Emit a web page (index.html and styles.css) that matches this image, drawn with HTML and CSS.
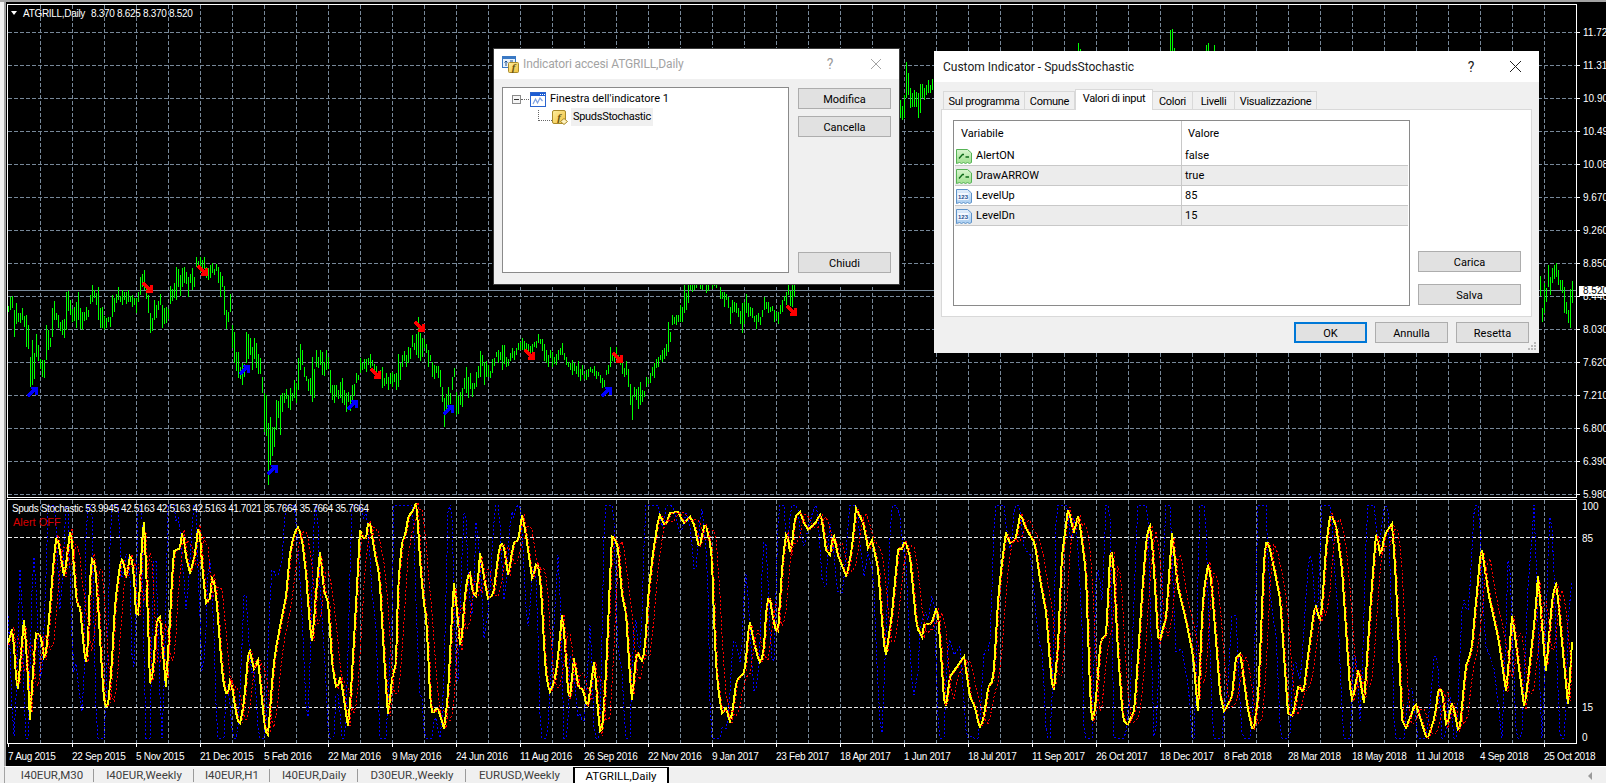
FILE: index.html
```html
<!DOCTYPE html>
<html lang="it">
<head>
<meta charset="utf-8">
<title>ATGRILL,Daily</title>
<link rel="stylesheet" href="styles.css">
</head>
<body>
<svg class="defs" width="0" height="0" aria-hidden="true">
  <defs>
    <linearGradient id="gGreen" x1="0" y1="0" x2="0" y2="1"><stop offset="0" stop-color="#d9f5d0"/><stop offset="1" stop-color="#9fe08f"/></linearGradient>
    <linearGradient id="gBlue" x1="0" y1="0" x2="0" y2="1"><stop offset="0" stop-color="#e3effb"/><stop offset="1" stop-color="#a9cdf0"/></linearGradient>
    <linearGradient id="gGold" x1="0" y1="0" x2="1" y2="1"><stop offset="0" stop-color="#fdeea0"/><stop offset="1" stop-color="#f0c13c"/></linearGradient>
    <symbol id="i-bool" viewBox="0 0 16 16">
      <path d="M.5 1.5h11l4 3.500v9.500l-2 1-2-1-2 1-2-1-2 1-2-1-3 1z" fill="url(#gGreen)" stroke="#56b356"/>
      <path d="M3 10.500l3.500-4H8M9.500 9H13" fill="none" stroke="#0f6b1a" stroke-width="1.300"/>
    </symbol>
    <symbol id="i-num" viewBox="0 0 16 16">
      <path d="M.5 1.5h11l4 3.500v9.500l-2 1-2-1-2 1-2-1-2 1-2-1-3 1z" fill="url(#gBlue)" stroke="#5f93c9"/>
      <rect x="1.500" y="5" width="11" height="7" fill="#f4f9ff"/>
      <text class="num-text" x="7" y="11">123</text>
    </symbol>
    <symbol id="i-func" viewBox="0 0 16 15">
      <rect x=".5" y=".5" width="13" height="13" rx="1.500" fill="url(#gGold)" stroke="#a98a2b"/>
      <text class="func-text" x="7" y="11">f</text>
      <path d="M12 8.500l3.500 3-3.500 3-3.500-3z" fill="#fff3c0" stroke="#a98a2b"/>
    </symbol>
    <symbol id="i-win" viewBox="0 0 16 15">
      <rect x=".5" y=".5" width="15" height="14" fill="#fff" stroke="#2a64cf"/>
      <rect x="1" y="1" width="14" height="3" fill="#1c5bd2"/>
      <path d="M10 2.500h1M12 2.500h1M14 2.500h1" stroke="#fff"/>
      <path d="M3 12l2.500-5 2 4 2.500-5 2.500 3" fill="none" stroke="#7c9fe0" stroke-width="1.200"/>
    </symbol>
  </defs>
</svg>

<div class="topline"></div>
<main class="workspace">
  <section class="pane pane-main">
    <div class="plot plot-main">
      <svg id="mainChart" class="chart" width="1568" height="492" viewBox="8 5 1568 492" shape-rendering="crispEdges"></svg>
      <div class="chart-title"><span class="caret"></span><span>ATGRILL,Daily</span><span class="ohlc">8.370 8.625 8.370 8.520</span></div>
    </div>
    <div class="price-axis">
      <span>11.72</span><span>11.31</span><span>10.90</span><span>10.49</span><span>10.08</span><span>9.670</span><span>9.260</span><span>8.850</span><span>8.440</span><span>8.030</span><span>7.620</span><span>7.210</span><span>6.800</span><span>6.390</span><span>5.980</span>
      <b class="price-tag">8.520</b>
    </div>
  </section>
  <section class="pane pane-sub">
    <div class="plot plot-sub">
      <svg id="subChart" class="chart" width="1568" height="243" viewBox="8 500 1568 243" shape-rendering="crispEdges"></svg>
      <div class="sub-title">Spuds Stochastic 53.9945 42.5163 42.5163 42.5163 41.7021 35.7664 35.7664 35.7664</div>
      <div class="alert-off">Alert OFF</div>
    </div>
    <div class="level-axis">
      <span class="lv lv100">100</span><span class="lv lv85">85</span><span class="lv lv15">15</span><span class="lv lv0">0</span>
    </div>
  </section>
  <div class="time-axis">
    <span>7 Aug 2015</span><span>22 Sep 2015</span><span>5 Nov 2015</span><span>21 Dec 2015</span><span>5 Feb 2016</span><span>22 Mar 2016</span><span>9 May 2016</span><span>24 Jun 2016</span><span>11 Aug 2016</span><span>26 Sep 2016</span><span>22 Nov 2016</span><span>9 Jan 2017</span><span>23 Feb 2017</span><span>18 Apr 2017</span><span>1 Jun 2017</span><span>18 Jul 2017</span><span>11 Sep 2017</span><span>26 Oct 2017</span><span>18 Dec 2017</span><span>8 Feb 2018</span><span>28 Mar 2018</span><span>18 May 2018</span><span>11 Jul 2018</span><span>4 Sep 2018</span><span>25 Oct 2018</span>
  </div>
</main>
<nav class="tabbar">
  <span class="ctab">I40EUR,M30</span>
  <span class="ctab">I40EUR,Weekly</span>
  <span class="ctab">I40EUR,H1</span>
  <span class="ctab">I40EUR,Daily</span>
  <span class="ctab">D30EUR.,Weekly</span>
  <span class="ctab ctab-last">EURUSD,Weekly</span>
  <span class="ctab ctab-active">ATGRILL,Daily</span>
  <span class="scroll-arrow"></span>
</nav>

<div class="dialog dlg-list">
  <header class="dlg-head dlg-head-inactive">
    <svg class="dlg-icon" width="17" height="17" viewBox="0 0 17 17">
      <rect x=".5" y=".5" width="13" height="11" fill="#eaf3fc" stroke="#3a79c4"/>
      <rect x="1" y="1" width="12" height="2" fill="#3a79c4"/>
      <path d="M4 5v5M2.500 6.500L4 5l1.500 1.500M8 5h3M8 8h3" fill="none" stroke="#1e4f8c"/>
      <rect x="6.500" y="6.500" width="10" height="10" rx="1" fill="url(#gGold)" stroke="#a98a2b"/>
      <text class="func-text" x="11.500" y="14.500">f</text>
    </svg>
    <span class="dlg-title">Indicatori accesi ATGRILL,Daily</span>
    <span class="dlg-help">?</span>
    <svg class="dlg-close" width="10" height="10" viewBox="0 0 10 10"><path d="M0 0l10 10M10 0L0 10" stroke="currentColor" fill="none"/></svg>
  </header>
  <div class="list-body">
    <div class="tree">
      <div class="tree-row">
        <span class="minus"></span><span class="dots-h"></span>
        <svg class="tree-icon" width="16" height="15"><use href="#i-win"/></svg>
        <span class="tree-label">Finestra dell'indicatore 1</span>
      </div>
      <div class="tree-row tree-child">
        <span class="elbow"></span>
        <svg class="tree-icon" width="16" height="15"><use href="#i-func"/></svg>
        <span class="tree-label tree-selected">SpudsStochastic</span>
      </div>
    </div>
    <div class="list-actions">
      <button class="btn">Modifica</button>
      <button class="btn">Cancella</button>
      <button class="btn btn-bottom">Chiudi</button>
    </div>
  </div>
</div>

<div class="dialog dlg-props">
  <header class="dlg-head">
    <span class="dlg-title">Custom Indicator - SpudsStochastic</span>
    <span class="dlg-help">?</span>
    <svg class="dlg-close" width="11" height="11" viewBox="0 0 11 11"><path d="M0 0l11 11M11 0L0 11" stroke="currentColor" fill="none"/></svg>
  </header>
  <div class="props-body">
    <div class="tabs">
      <span class="tab t1">Sul programma</span>
      <span class="tab t2">Comune</span>
      <span class="tab t3 tab-active">Valori di input</span>
      <span class="tab t4">Colori</span>
      <span class="tab t5">Livelli</span>
      <span class="tab t6">Visualizzazione</span>
    </div>
    <div class="panel">
      <div class="vargrid">
        <div class="row row-head"><span class="c1 head-cell">Variabile</span><span class="c2 head-cell">Valore</span></div>
        <div class="row"><span class="c1"><svg class="var-icon" width="16" height="16"><use href="#i-bool"/></svg>AlertON</span><span class="c2">false</span></div>
        <div class="row row-alt"><span class="c1"><svg class="var-icon" width="16" height="16"><use href="#i-bool"/></svg>DrawARROW</span><span class="c2">true</span></div>
        <div class="row"><span class="c1"><svg class="var-icon" width="16" height="16"><use href="#i-num"/></svg>LevelUp</span><span class="c2">85</span></div>
        <div class="row row-alt"><span class="c1"><svg class="var-icon" width="16" height="16"><use href="#i-num"/></svg>LevelDn</span><span class="c2">15</span></div>
      </div>
      <div class="panel-side">
        <button class="btn btn-wide">Carica</button>
        <button class="btn btn-wide">Salva</button>
      </div>
    </div>
    <div class="props-foot">
      <button class="btn btn-foot btn-default">OK</button>
      <button class="btn btn-foot">Annulla</button>
      <button class="btn btn-foot">Resetta</button>
    </div>
  </div>
  <svg class="grip" width="9" height="9" viewBox="0 0 9 9"><path d="M7 1h2v2H7zM4 4h2v2H4zM7 4h2v2H7zM1 7h2v2H1zM4 7h2v2H4zM7 7h2v2H7z" fill="#b8b8b8"/></svg>
</div>
<script src="chart.js"></script>
</body>
</html>
```
FILE: styles.css
```css
* { box-sizing: border-box; }
html, body { margin: 0; padding: 0; }
body {
  width: 1606px;
  height: 783px;
  overflow: hidden;
  position: relative;
  background: #f0f0f0;
  font-family: Roboto, "Liberation Sans", sans-serif;
  display: flex;
  flex-direction: column;
}
.defs { position: absolute; }
.num-text { font: bold 6px "Liberation Sans", sans-serif; fill: #1d4f8f; text-anchor: middle; }
.func-text { font: italic bold 11px "Liberation Serif", serif; fill: #6b5410; text-anchor: middle; }

/* chart drawing */
.grid { fill: none; stroke: #778899; stroke-width: 1; stroke-dasharray: 4 2; }
.level { fill: none; stroke: #e8e8e8; stroke-width: 1; stroke-dasharray: 4 2; }
.price-line { fill: none; stroke: #778899; stroke-width: 1; }
.bars { fill: none; stroke: #00ff00; stroke-width: 1; }
.arrow-up { fill: #0000ff; }
.arrow-dn { fill: #ff0000; }
.stoch-blue { fill: none; stroke: #0000ff; stroke-width: 1; stroke-dasharray: 2 2; }
.stoch-red-slow { fill: none; stroke: #ff0000; stroke-width: 1; stroke-dasharray: 2 2; }
.stoch-yellow { fill: none; stroke: #ffff00; stroke-width: 2; }
.stoch-red { fill: none; stroke: #ff0000; stroke-width: 1; stroke-dasharray: 2 2; }

.topline { height: 2px; background: #a3a3a3; flex: none; }

/* chart workspace */
.workspace {
  flex: none;
  height: 764px;
  margin-left: 4px;
  border-left: 2px solid #a3a3a3;
  padding: 2px 0 0 1px;
  background: #000;
  color: #fff;
  font: 10px "Liberation Sans", sans-serif;
  letter-spacing: -.3px;
  display: flex;
  flex-direction: column;
}
.pane { display: flex; flex: none; }
.pane-main { height: 494px; margin-bottom: 1px; }
.pane-sub { height: 245px; }
.plot {
  position: relative;
  width: 1570px;
  border: 1px solid #fff;
}
.chart { display: block; }
.chart-title {
  position: absolute;
  left: 3px;
  top: 1px;
  display: flex;
  align-items: center;
  height: 14px;
  white-space: nowrap;
}
.caret {
  width: 0;
  height: 0;
  margin-right: 6px;
  border: 3.500px solid transparent;
  border-top: 4px solid #fff;
  border-bottom: 0;
}
.ohlc { margin-left: 6px; }
.sub-title {
  position: absolute;
  left: 4px;
  top: 2px;
  line-height: 14px;
  white-space: nowrap;
  letter-spacing: -.4px;
}
.alert-off {
  position: absolute;
  left: 5px;
  top: 15px;
  line-height: 14px;
  font-size: 11px;
  letter-spacing: 0;
  color: #d80000;
  white-space: nowrap;
}

/* price scale */
.price-axis {
  position: relative;
  flex: 1;
  padding-top: 21.500px;
  display: flex;
  flex-direction: column;
}
.price-axis span {
  flex: none;
  height: 33px;
  line-height: 13px;
  padding-left: 6px;
  position: relative;
  white-space: nowrap;
  overflow: hidden;
  letter-spacing: 0;
}
.price-axis span::before {
  content: "";
  position: absolute;
  left: 0;
  top: 6px;
  width: 3px;
  height: 1px;
  background: #fff;
}
.price-tag {
  position: absolute;
  left: 2px;
  right: 0;
  top: 282px;
  height: 10px;
  line-height: 10px;
  padding-left: 4px;
  background: #fff;
  color: #000;
  font-weight: normal;
  letter-spacing: 0;
}
.level-axis {
  position: relative;
  flex: 1;
  letter-spacing: 0;
}
.lv { position: absolute; left: 5px; line-height: 13px; }
.lv100 { top: 1px; }
.lv85 { top: 33px; }
.lv15 { top: 202px; }
.lv0 { top: 232px; }

/* date scale */
.time-axis {
  flex: none;
  height: 21px;
  display: grid;
  grid-template-columns: repeat(25, 64px);
  padding-left: 1px;
}
.time-axis span {
  position: relative;
  padding-top: 6px;
  white-space: nowrap;
  line-height: 13px;
}
.time-axis span::before {
  content: "";
  position: absolute;
  left: 0;
  top: 0;
  width: 1px;
  height: 3px;
  background: #fff;
}

/* chart tabs */
.tabbar {
  flex: none;
  height: 17px;
  margin-left: 4px;
  padding-left: 5px;
  border-left: 1px solid #a3a3a3;
  border-top: 1px solid #fff;
  display: grid;
  grid-template-columns: 84px 100px 76px 88px 108px 107px 96px;
  justify-content: start;
  font-size: 11.500px;
  color: #404040;
  position: relative;
}
.ctab {
  text-align: center;
  line-height: 17px;
  white-space: nowrap;
  background: #f0f0f0;
  position: relative;
}
.ctab:not(.ctab-active)::after {
  content: "";
  position: absolute;
  right: 0;
  top: 2px;
  bottom: 3px;
  width: 1px;
  background: #9a9a9a;
}
.ctab-last::after { display: none; }
.ctab-active {
  background: #fff;
  color: #000;
  border-left: 2px solid #000;
  border-right: 2px solid #000;
  border-top: 1px solid #000;
}
.scroll-arrow {
  position: absolute;
  left: 1583px;
  top: 5px;
  width: 0;
  height: 0;
  border: 4px solid transparent;
  border-right: 4px solid #9a9a9a;
  border-left: 0;
}

/* dialogs */
.dialog {
  position: absolute;
  background: #f0f0f0;
  color: #000;
  font-size: 11px;
  display: flex;
  flex-direction: column;
}
.dlg-list { left: 493px; top: 48px; width: 407px; height: 237px; border: 1px solid #3a3a3a; }
.dlg-props { left: 934px; top: 51px; width: 605px; height: 302px; }
.dlg-head {
  flex: none;
  height: 30px;
  background: #fff;
  display: flex;
  align-items: center;
  color: #202020;
  padding-left: 9px;
}
.dlg-props .dlg-head { height: 31px; }
.dlg-head-inactive { color: #a3a3a3; }
.dlg-head-inactive .dlg-title { letter-spacing: -.13px; }
.dlg-icon { margin-left: -1px; margin-right: 4px; flex: none; }
.dlg-title { flex: 1; white-space: nowrap; font-size: 12px; }
.dlg-help { width: 12px; text-align: center; font-size: 14px; margin-right: 33px; }
.dlg-close { flex: none; margin-right: 18px; }
.dlg-head-inactive .dlg-help { margin-right: 35px; color: #9a9a9a; }
.dlg-head-inactive .dlg-close { margin-right: 18px; }

/* indicator list */
.list-body { flex: 1; display: flex; gap: 9px; padding: 8px 8px 11px; }
.tree {
  flex: 1;
  background: #fff;
  border: 1px solid #8a8a8a;
  padding-top: 2px;
  color: #000;
}
.tree-row { display: flex; align-items: center; height: 18px; padding-left: 9px; }
.tree-child { padding-left: 35px; }
.minus {
  width: 9px;
  height: 9px;
  border: 1px solid #8a8a8a;
  position: relative;
  background: #f5f5f5;
  flex: none;
}
.minus::before {
  content: "";
  position: absolute;
  left: 1px;
  right: 1px;
  top: 3px;
  height: 1px;
  background: #333;
}
.dots-h { width: 8px; height: 0; border-top: 1px dotted #666; flex: none; }
.tree-icon { flex: none; margin-right: 5px; margin-left: 0; }
.tree-row:first-child .tree-icon { margin-left: 1px; margin-right: 4px; }
.elbow {
  width: 14px;
  height: 11px;
  margin-top: -3px;
  border-left: 1px dotted #666;
  border-bottom: 1px dotted #666;
  flex: none;
}
.tree-child .tree-icon { margin-right: 3px; }
.tree-label { white-space: nowrap; line-height: 18px; }
.tree-selected { background: #f0f0f0; padding: 0 2px; letter-spacing: -.3px; }
.list-actions { flex: none; width: 93px; display: flex; flex-direction: column; gap: 7px; padding-top: 1px; }
.btn {
  display: block;
  height: 21px;
  padding: 1px 0 0;
  background: #e1e1e1;
  border: 1px solid #adadad;
  border-radius: 0;
  font: inherit;
  color: #000;
}
.btn-bottom { margin-top: auto; }

/* properties */
.props-body { flex: 1; padding: 7px 7px 0; display: flex; flex-direction: column; position: relative; }
.tabs { display: flex; align-items: flex-end; height: 21px; padding-left: 2px; margin-bottom: -1px; position: relative; z-index: 1; }
.tab {
  height: 19px;
  line-height: 19px;
  background: #f0f0f0;
  border: 1px solid #d9d9d9;
  border-left: 0;
  text-align: center;
  white-space: nowrap;
  flex: none;
  color: #000;
  letter-spacing: -.3px;
}
.t1 { width: 82px; border-left: 1px solid #d9d9d9; }
.t2 { width: 50px; }
.t3 { width: 78px; }
.t4 { width: 40px; }
.t5 { width: 42px; }
.t6 { width: 82px; }
.tab-active { height: 21px; background: #fff; border-bottom: 0; border-left: 1px solid #d9d9d9; line-height: 18px; }
.panel {
  flex: none;
  height: 208px;
  background: #fff;
  border: 1px solid #d9d9d9;
  padding: 10px 10px 10px 11px;
  display: flex;
  gap: 8px;
}
.vargrid { flex: none; width: 457px; border: 1px solid #8a8a8a; padding: 0 1px; background: #fff; }
.row {
  display: grid;
  grid-template-columns: 226px 1fr;
  height: 20px;
  border-bottom: 1px solid #c8c8c8;
  align-items: center;
  white-space: nowrap;
}
.row-head { height: 25px; border-bottom: 0; }
.row-alt { background: #ececec; }
.c1 { display: flex; align-items: center; height: 100%; padding-left: 1px; }
.c2 { height: 100%; display: flex; align-items: center; padding-left: 3px; border-left: 1px solid #c8c8c8; }
.head-cell { padding-left: 6px; }
.var-icon { margin-right: 4px; flex: none; }
.panel-side { flex: 1; display: flex; flex-direction: column; justify-content: flex-end; gap: 12px; padding-bottom: 1px; }
.btn-wide { width: 103px; }
.props-foot { display: flex; justify-content: flex-end; gap: 8px; padding-right: 3px; margin-top: 5px; }
.btn-foot { width: 73px; }
.btn-default { border: 2px solid #0078d7; }
.grip { position: absolute; right: 3px; bottom: 3px; }
```
FILE: chart.js
```js
(function () {
  // Bars: x, high y, low y in chart pixels.
  var bars = [[8,306,312],[10,297,310],[12,296,308],[15,310,337],[20,313,323],[23,308,320],[27,315,347],[31,357,387],[33,340,385],[37,334,357],[42,360,377],[44,360,378],[47,325,360],[50,338,347],[53,308,337],[55,301,320],[58,315,328],[62,320,335],[67,292,330],[70,300,315],[77,302,328],[79,292,320],[82,312,330],[87,307,320],[93,285,302],[97,293,305],[99,287,320],[102,307,328],[107,318,328],[110,317,327],[113,295,317],[119,287,300],[122,290,305],[128,290,302],[132,295,307],[137,298,313],[140,277,295],[144,270,290],[148,295,313],[151,313,333],[154,300,320],[161,294,305],[163,305,328],[167,307,323],[170,286,304],[177,267,300],[182,268,287],[188,277,297],[193,268,290],[197,257,267],[201,257,272],[210,265,278],[213,263,273],[218,267,283],[221,272,297],[224,286,315],[227,310,329],[231,294,312],[233,325,348],[234,332,363],[238,352,378],[242,363,385],[247,332,363],[252,347,370],[257,343,368],[262,377,393],[265,393,432],[268,423,485],[271,417,465],[274,427,447],[277,400,430],[280,395,435],[285,393,403],[290,388,410],[296,383,403],[298,358,390],[300,344,370],[305,367,377],[310,378,395],[312,357,402],[317,350,367],[323,352,375],[327,350,370],[330,370,393],[335,385,403],[340,382,398],[343,378,403],[347,393,412],[353,385,400],[357,373,383],[360,358,373],[370,354,368],[380,370,378],[383,367,388],[388,377,390],[392,372,387],[397,373,390],[399,354,387],[403,355,367],[408,347,363],[413,335,347],[418,317,358],[423,338,357],[428,350,367],[433,362,377],[440,370,387],[443,387,402],[445,398,427],[448,387,412],[452,377,390],[454,368,377],[457,392,415],[462,388,407],[467,367,393],[472,383,397],[477,372,387],[481,351,377],[485,362,385],[492,359,373],[498,350,363],[503,345,370],[507,357,367],[513,348,358],[522,338,350],[532,344,352],[538,334,343],[545,344,361],[552,352,367],[562,343,355],[567,357,365],[572,360,375],[578,361,377],[587,370,380],[594,366,376],[600,375,383],[603,378,388],[608,365,374],[610,347,367],[617,347,357],[622,363,374],[627,361,375],[628,369,387],[630,384,405],[632,395,420],[635,387,397],[638,387,409],[640,382,405],[644,391,397],[647,377,387],[651,373,383],[654,363,378],[658,357,367],[663,350,362],[668,322,352],[673,315,325],[680,305,322],[685,283,313],[690,270,290],[700,272,289],[712,275,289],[717,274,288],[720,287,299],[725,292,307],[731,307,324],[732,300,313],[737,303,313],[742,303,333],[746,294,313],[752,308,318],[757,315,329],[760,317,325],[764,297,310],[768,302,313],[775,310,322],[778,312,324],[782,300,312],[786,292,305],[792,262,307],[800,240,270],[850,200,240],[898,95,118],[900,100,118],[902,106,120],[904,95,118],[906,62,98],[908,73,95],[910,88,108],[912,93,107],[914,90,107],[916,92,107],[918,93,118],[920,84,113],[922,84,98],[924,88,100],[926,85,95],[928,80,93],[930,85,93],[932,79,90],[934,75,88]];
  var tail = [[1540,276,296],[1542,308,322],[1544,283,313],[1546,288,302],[1548,265,287],[1550,277,295],[1552,268,283],[1554,265,279],[1556,263,277],[1558,270,285],[1560,280,290],[1562,280,293],[1564,287,313],[1566,302,314],[1568,310,323],[1570,289,328],[1572,281,303]];
  var tops = [[1078,43,51],[1080,49,51],[1170,30,51],[1172,29,51],[1174,48,51],[1206,45,51],[1208,43,51],[1214,45,51]];
  var down = [[147,287],[202,270],[375,373],[419,326],[529,354],[617,357],[791,310]];
  var up = [[32,392],[244,370],[272,470],[352,405],[448,410],[606,392]];

  // Yellow line, written in three runs with different x scales.
  var z1 = [24,492,38,440,52,650,62,530,72,420,80,520,90,720,98,590,107,460,122,465,135,550,148,410,160,250,170,160,180,215,193,295,212,140,225,300,230,375,240,380,255,540,262,550,270,300,278,215,290,300,298,440,310,640,315,680,325,675,335,560,345,370,362,240,370,240,378,295,392,220,400,260,408,400,416,405,425,200,432,125,440,300,450,610,458,590,470,420,480,410,490,530,498,620,510,420,520,215,540,205,548,145,558,230,570,280,585,225,597,120,605,240,618,370,630,355,638,275,650,360,665,560,675,640,685,640,692,590,705,680,712,720,722,730,735,640,745,515,752,515,760,570,775,540,785,650,795,750,805,765,815,620,825,520,842,430,858,350,870,220,880,170,893,140,905,170,918,280,930,440,937,490,948,340,960,215,972,330,985,370,997,560,1010,630,1022,590,1035,680,1045,745,1055,600,1070,340,1080,150,1088,175,1098,175,1107,110,1118,180,1128,240,1138,280,1150,490,1158,620,1165,715,1175,600,1188,550,1195,300,1207,180,1215,170,1225,110,1240,90,1250,65,1260,240,1270,360,1280,420,1292,690,1300,700,1312,680,1325,720,1333,750,1345,630,1355,420,1362,310,1372,400,1382,520,1395,340,1408,265,1418,340,1430,350,1440,220,1450,280,1463,355,1480,345,1498,200];
  var z2 = [10,190,25,290,40,190,55,180,67,100,80,180,97,300,110,245,118,270,128,400,135,560,148,640,165,600,175,520,187,395,195,490,207,680,222,535,235,620,250,630,262,690,283,540,293,680,303,785,315,640,325,420,335,170,345,175,355,210,365,340,378,400,385,510,395,670,410,510,425,545,435,510,445,340,460,210,478,100,495,140,510,100,535,95,550,130,570,110,585,140,597,210,615,125,635,210,640,370,650,590,665,700,678,685,692,730,710,600,735,575,748,415,760,480,778,550,790,530,800,370,808,345,820,420,833,470,848,240,860,150,872,230,885,110,900,95,912,130,925,150,945,130,963,100,978,210,990,225,1000,160,1015,230,1040,290,1055,210,1068,85,1090,130,1105,210,1115,175,1135,270,1150,480,1158,525,1175,410,1195,200,1205,210,1215,180,1230,230,1250,440,1268,475,1272,435,1295,430,1312,375,1320,480,1335,700,1350,590,1392,530,1410,650,1425,680,1438,745,1450,720,1465,620,1480,600,1495,350];
  var z3 = [0,300,15,155,25,190,40,180,53,100,65,140,90,190,105,310,120,400,130,560,138,650,150,500,160,230,177,80,190,160,203,105,222,270,235,700,240,735,250,640,260,480,275,465,285,220,292,215,305,510,318,720,330,735,348,690,370,300,380,160,390,135,400,300,410,495,430,410,445,160,460,320,480,415,500,530,512,700,525,350,540,240,550,350,570,650,580,695,600,650,610,535,622,520,640,680,655,760,668,650,685,190,695,190,710,270,725,360,745,700,758,708,772,615,785,640,800,500,815,370,830,430,845,180,855,100,870,140,885,270,905,620,912,665,927,565,942,670,960,350,973,160,985,230,995,165,1015,130,1025,320,1040,720,1050,745,1075,670,1105,780,1125,710,1135,620,1145,640,1155,745,1170,665,1188,765,1205,560,1220,510,1245,195,1265,350,1275,400,1290,480,1310,640,1325,400,1340,540,1357,690,1385,400,1392,285,1412,580,1430,340,1440,310,1455,500,1470,680,1480,480];

  var pts = [];
  function run(a, ox, sx) {
    for (var i = 0; i < a.length; i += 2) pts.push([ox + a[i] / sx, 480 + a[i + 1] / 3]);
  }
  run(z1, 0, 3); run(z2, 500, 3); run(z3, 1000, 2.587);

  function yAt(x) {
    if (x <= pts[0][0]) return pts[0][1];
    var n = pts.length - 1;
    if (x >= pts[n][0]) return pts[n][1];
    for (var i = 0; i < n; i++) {
      if (x <= pts[i + 1][0]) {
        var t = (x - pts[i][0]) / (pts[i + 1][0] - pts[i][0]);
        return pts[i][1] + t * (pts[i + 1][1] - pts[i][1]);
      }
    }
  }
  function clamp(v) { return Math.max(505, Math.min(738, v)); }
  function line(fn, cls) {
    var s = [];
    for (var x = 8; x <= 1572; x += 2) s.push(x + "," + fn(x).toFixed(1));
    return '<polyline class="' + cls + '" points="' + s.join(" ") + '"/>';
  }

  var seed = 7;
  function rnd() { seed = (seed * 16807) % 2147483647; return seed / 2147483647; }

  function barsPath() {
    var d = "", all = bars.concat([[936, 70, 80]]), i = 0, exact = {};
    all.forEach(function (b) { exact[b[0] - b[0] % 2] = b; });
    for (var x = 8; x <= 934; x += 2) {
      while (i < all.length - 2 && all[i + 1][0] < x) i++;
      var a = all[i], b = all[i + 1], t = Math.max(0, Math.min(1, (x - a[0]) / (b[0] - a[0])));
      var hi = a[1] + t * (b[1] - a[1]), lo = a[2] + t * (b[2] - a[2]);
      if (exact[x]) { hi = exact[x][1]; lo = exact[x][2]; }
      else {
        var h = (lo - hi) / 2, m = (lo + hi) / 2 + (rnd() - .5) * h * 1.5;
        h *= .4 + .5 * rnd();
        hi = m - h; lo = m + h;
      }
      d += "M" + (x + .5) + " " + Math.round(hi) + "V" + Math.round(lo);
    }
    tail.concat(tops).forEach(function (b) { d += "M" + (b[0] + .5) + " " + b[1] + "V" + b[2]; });
    return d;
  }

  function grid(y0, y1) {
    var d = "";
    for (var x = 40; x < 1576; x += 32) d += "M" + (x + .5) + " " + y0 + "V" + y1;
    return d;
  }
  function arrow(p, flip) {
    var base = [[4,0],[11,0],[11,8],[8.5,8],[8,5.5],[2.5,11],[0,8.5],[5.5,3],[4,2.5]];
    var s = base.map(function (q) {
      return (p[0] - 5.5 + q[0]) + "," + (p[1] - 5.5 + (flip ? 11 - q[1] : q[1]));
    }).join(" ");
    return '<polygon class="' + (flip ? "arrow-dn" : "arrow-up") + '" points="' + s + '"/>';
  }

  var h = "", d = grid(5, 497);
  for (var y = 32; y <= 494; y += 33) d += "M8 " + (y + .5) + "H1576";
  h += '<path class="grid" d="' + d + '"/>';
  h += '<path class="price-line" d="M8 290.500H1576"/>';
  h += '<path class="bars" d="' + barsPath() + '"/>';
  down.forEach(function (p) { h += arrow(p, true); });
  up.forEach(function (p) { h += arrow(p, false); });
  document.getElementById("mainChart").innerHTML = h;

  var s = '<path class="grid" d="' + grid(500, 743) + '"/>';
  s += '<path class="level" d="M8 537.500H1576M8 707.500H1576"/>';
  s += line(function (x) {
    var v = yAt(x + 4);
    return clamp(v + .9 * (v - yAt(x - 4)));
  }, "stoch-blue");
  s += line(function (x) { return yAt(x); }, "stoch-yellow");
  s += line(function (x) { return clamp((yAt(x - 5) + yAt(x - 9)) / 2); }, "stoch-red-slow");
  s += line(function (x) { return yAt(x - 1.500); }, "stoch-red");
  document.getElementById("subChart").innerHTML = s;
})();
```
